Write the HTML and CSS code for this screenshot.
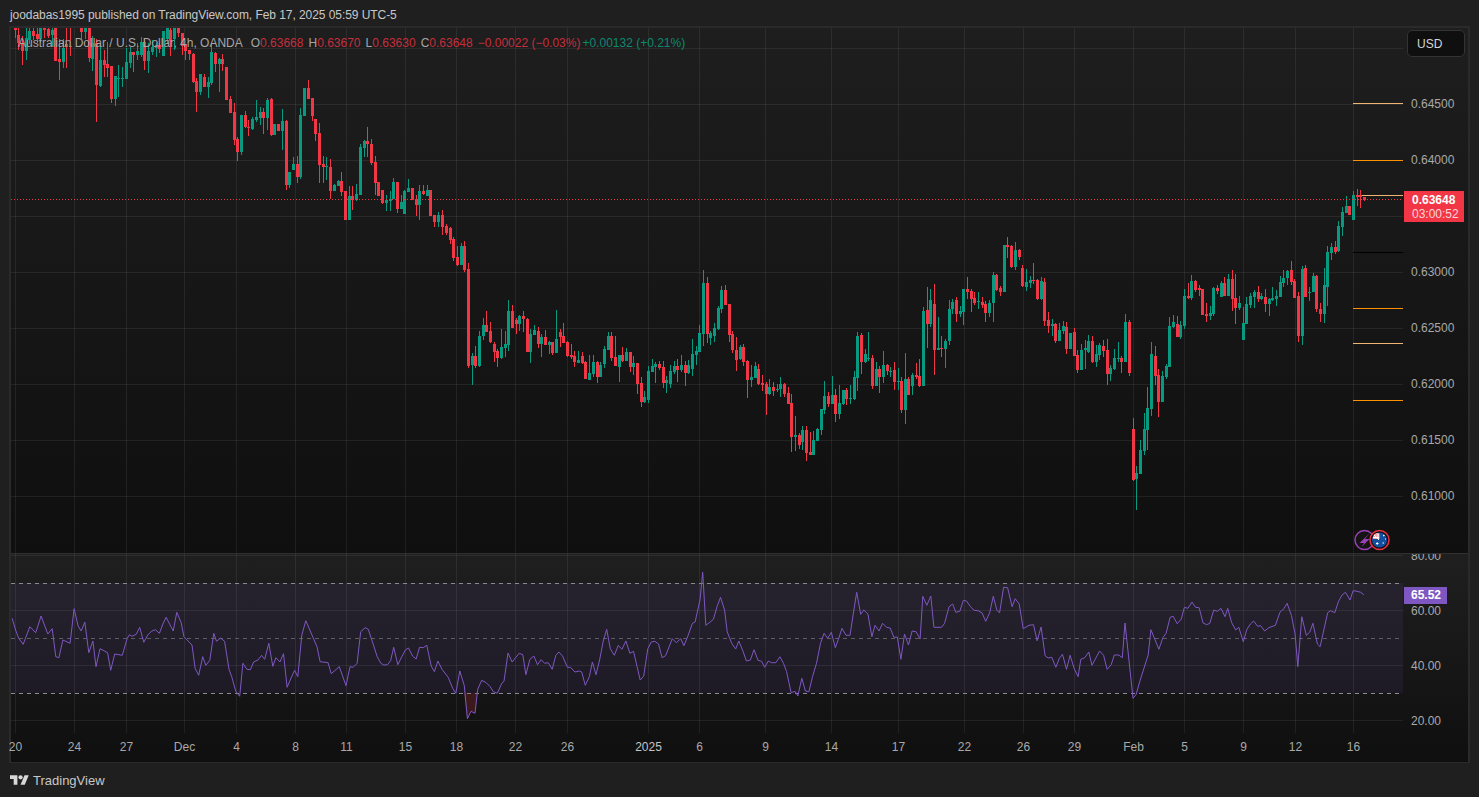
FILE: index.html
```html
<!DOCTYPE html>
<html lang="en">
<head>
  <meta charset="UTF-8">
  <title>AUD/USD 4h - TradingView</title>
  <link rel="stylesheet" href="styles.css">
</head>
<body>
  <header class="publish-bar">joodabas1995 published on TradingView.com, Feb 17, 2025 05:59 UTC-5</header>

  <main class="chart">
    <section class="pane pane-main">
      <svg class="plot" id="mainPlot" viewBox="11 28 1392 525"></svg>
      <div class="legend">
        <span class="legend-title">Australian Dollar / U.S. Dollar, 4h, OANDA</span>
        <span>O<b class="down">0.63668</b></span>
        <span>H<b class="down">0.63670</b></span>
        <span>L<b class="down">0.63630</b></span>
        <span>C<b class="down">0.63648</b></span>
        <span class="down legend-change">−0.00022 (−0.03%)</span>
        <span class="up">+0.00132 (+0.21%)</span>
      </div>
      <div class="price-scale main-scale">
        <div class="currency">USD</div>
        <div class="tick">0.64500</div>
        <div class="tick">0.64000</div>
        <div class="tick"></div>
        <div class="tick">0.63000</div>
        <div class="tick">0.62500</div>
        <div class="tick">0.62000</div>
        <div class="tick">0.61500</div>
        <div class="tick">0.61000</div>
        <div class="last-price"><strong>0.63648</strong><span>03:00:52</span></div>
      </div>
    </section>

    <section class="lower">
      <div class="pane pane-rsi">
        <svg class="plot" id="rsiPlot" viewBox="11 554 1392 179"></svg>
        <div class="price-scale rsi-scale">
          <div class="tick">80.00</div>
          <div class="tick">60.00</div>
          <div class="tick">40.00</div>
          <div class="tick">20.00</div>
          <div class="rsi-value">65.52</div>
        </div>
      </div>
      <div class="time-axis" id="timeAxis"></div>
    </section>
  </main>

  <footer class="brand">
    <svg class="brand-logo" viewBox="0 4 36 18"><path d="M14 22H7V11H0V4h14v18zM28 22h-8l7.5-18h8L28 22z"/><circle cx="20" cy="8" r="4"/></svg>
    <span>TradingView</span>
  </footer>

  <script src="chart.js"></script>
</body>
</html>
```

FILE: styles.css
```css
* {
  box-sizing: border-box;
}

body {
  margin: 0;
  height: 797px;
  overflow: hidden;
  background-color: #1f1f1f;
  color: #b2b5be;
  font-family: "Liberation Sans", Arial, sans-serif;
  font-size: 12px;
}

.publish-bar {
  height: 26px;
  padding: 8px 0 0 10px;
  line-height: 15px;
  letter-spacing: -0.06px;
  color: #c8c8c8;
}

.chart {
  height: 737px;
  margin: 0 9px 0 9px;
  border: 2px solid #2a2a2a;
  display: flex;
  flex-direction: column;
}

.pane {
  position: relative;
  display: flex;
  overflow: hidden;
}

.plot {
  display: block;
  width: 1392px;
  flex: none;
}

.pane-main {
  height: 526px;
  flex: none;
  border-bottom: 1px solid #303030;
  background: linear-gradient(#1e1e1e, #0f0f0f);
}

.pane-main .plot {
  height: 525px;
}

.lower {
  flex: 1;
  background: linear-gradient(#1f1f1f, #0f0f0f);
}

.pane-rsi {
  height: 179px;
}

.pane-rsi .plot {
  height: 179px;
}

.price-scale {
  position: relative;
  flex: 1;
  padding-left: 8px;
  color: #a9a9a9;
}

.main-scale {
  padding-top: 48px;
}

.tick {
  height: 56px;
  line-height: 56px;
}

.rsi-scale {
  margin-top: -25px;
}

.rsi-scale .tick {
  height: 55px;
  line-height: 55px;
}

.currency {
  position: absolute;
  top: 2px;
  left: 4px;
  width: 58px;
  height: 27px;
  padding-left: 9px;
  line-height: 26px;
  color: #d6d6d6;
  background-color: #0f0f0f;
  border: 1px solid #333;
  border-radius: 5px;
}

.last-price {
  position: absolute;
  top: 163px;
  left: 1px;
  width: 60px;
  height: 31px;
  padding: 2px 0 0 8px;
  display: flex;
  flex-direction: column;
  line-height: 14px;
  color: #fff;
  background-color: #f23645;
}

.last-price span {
  color: rgba(255, 255, 255, 0.8);
}

.rsi-value {
  position: absolute;
  top: 58px;
  left: 1px;
  width: 43px;
  height: 17px;
  padding-left: 7px;
  line-height: 17px;
  font-weight: bold;
  color: #fff;
  background-color: #7e57c2;
}

.legend {
  position: absolute;
  top: 8px;
  left: 7px;
  display: flex;
  gap: 5px;
  line-height: 15px;
  color: #a6a6a6;
}

.legend b {
  font-weight: normal;
}

.legend-title {
  margin-right: 3px;
}

.legend-change {
  margin-right: -3px;
}

.down {
  color: #c52f3d;
}

.up {
  color: #0b8a70;
}

.time-axis {
  position: relative;
  height: 29px;
  color: #a9a9a9;
}

.time-label {
  position: absolute;
  top: 7px;
  line-height: 15px;
  transform: translateX(-50%);
}

.time-label.year {
  color: #c4c4c4;
}

.brand {
  height: 34px;
  padding: 0 0 0 10px;
  display: flex;
  align-items: center;
  gap: 4px;
  font-size: 13px;
  color: #c8c8c8;
}

.brand-logo {
  width: 19px;
  height: 10px;
  fill: #d8d8d8;
}

.grid {
  stroke: rgba(255, 255, 255, 0.07);
  stroke-width: 1;
  shape-rendering: crispEdges;
}

.bars-up {
  fill: #089981;
  shape-rendering: crispEdges;
}

.bars-down {
  fill: #f23645;
  shape-rendering: crispEdges;
}

.level {
  stroke: #ff9100;
  stroke-width: 1;
  shape-rendering: crispEdges;
}

.level.pale {
  stroke: #efb573;
}

.level.dark {
  stroke: #000;
}

.price-line {
  stroke: #f23645;
  stroke-width: 1;
  stroke-dasharray: 1 2;
  shape-rendering: crispEdges;
}

.rsi-band {
  fill: rgba(126, 87, 194, 0.1);
}

.rsi-dash {
  stroke: #8a8a92;
  stroke-width: 1;
  stroke-dasharray: 4 4;
  shape-rendering: crispEdges;
}

.rsi-dash.mid {
  stroke: #5c5c62;
}

.rsi-line {
  fill: none;
  stroke: #7e57c2;
  stroke-width: 1;
}

.rsi-low {
  fill: rgba(242, 54, 69, 0.18);
}
```

FILE: chart.js
```js
var PLOT_LEFT = 11;
var PLOT_RIGHT = 1403;

// bars: colour + body top, body bottom, wick top, wick bottom
var blocks = [
  { left: 0, top: 30, first: 45, last: 1315, bars:
    "r-6,0,-6,23 r15,40,-6,60 r43,63,18,105 g23,63,-6,90 g3,30,-6,43 r3,18,-6,30 r13,26,-6,38 g-6,26,-6,38 r-6,0,-6,23 r-2,18,-6,23 " +
    "g0,16,-6,48 r-6,93,-6,93 r88,95,28,150 g53,95,28,113 r43,50,-6,113 r48,51,-6,78 r-9,-8,-9,-8 r-9,-8,-9,-8 r-6,6,-6,28 g-6,6,-6,28 " +
    "r-6,83,-6,96 g38,86,18,123 r38,165,28,276 g90,168,48,170 r90,105,60,140 r103,113,35,140 r108,207,108,218 g138,207,138,228 g145,147,105,200 g145,148,110,170 " +
    "g97,147,55,148 g65,100,50,115 r67,75,65,125 g63,75,40,90 g35,75,20,80 r35,93,25,120 g62,93,40,128 g52,65,30,75 g45,55,40,82 r45,58,40,70 " +
    "g3,78,3,78 g-6,28,-6,40 r0,33,-6,78 g-6,28,-6,60 r-6,8,-6,20 r8,48,8,75 r43,63,43,90 r60,72,60,90 r72,156,70,160 r153,186,145,245 " +
    "g132,186,132,195 r141,171,132,172 g156,171,140,204 g66,159,40,165 r69,102,66,125 g87,102,85,186 r87,102,72,123 r111,210,111,210 r207,249,198,250 r246,330,220,345 " +
    "r327,366,320,392 g255,366,255,375 r255,291,243,295 r291,294,270,318 g267,297,262,300 g261,270,210,275 g246,264,230,285 r246,264,233,312 g210,264,205,300 r207,315,204,318 " +
    "g282,315,282,315 r282,303,282,303 g273,303,237,360 r273,465,270,480 g426,465,426,474 g402,420,381,420 r402,441,378,459 g255,441,234,447 g174,258,174,258 r174,207,150,207 " +
    "r204,258,204,273 r267,312,267,333 r309,405,279,459 r402,411,378,459 g408,411,381,450 r411,483,387,507 g465,483,462,483 g453,468,450,468 r453,486,426,498 r483,570,483,570 " +
    "g498,570,468,570 r498,510,468,540 g492,510,462,512 g351,495,342,495 g333,354,330,380 r333,342,291,382 r342,399,327,405 r396,459,378,495 r456,498,456,498 r480,519,480,522 " +
    "g510,519,495,543 g507,513,483,543 g456,507,444,507 r456,537,456,549 g516,537,495,537 g483,552,480,552 g474,486,447,486 r474,510,474,510 r507,525,495,558 g483,525,465,570 " +
    "r483,492,465,495 g480,498,465,498 r480,558,480,558 r555,575,555,590 g555,575,545,590" },
  { left: 440, top: 170, first: 8, last: 1375, bars:
    "r135,171,120,195 r168,189,162,195 r174,210,171,222 r207,264,201,273 r261,286,228,288 g228,285,219,285 r228,300,213,306 r297,588,279,594 g558,585,549,645 r558,588,528,594 " +
    "g498,588,483,591 g465,498,444,510 r465,486,423,486 r483,516,456,519 r522,546,516,576 r543,564,537,591 g531,564,477,567 g522,534,483,561 g423,525,390,543 r423,474,405,474 " +
    "r450,462,444,492 g438,462,435,483 r438,447,423,486 r447,546,444,546 g492,546,477,579 g480,495,465,495 r483,522,471,534 g501,522,492,561 r501,525,480,525 g516,525,513,552 " +
    "r516,549,516,555 g507,549,420,549 r486,501,477,531 r498,519,459,519 r516,558,513,561 r555,561,522,567 r558,576,543,591 g570,579,543,579 r558,579,546,582 r576,627,573,627 " +
    "g609,630,555,630 g576,612,555,621 r576,621,573,639 g585,621,576,621 g537,582,528,594 g498,540,486,540 r498,564,486,573 r561,588,498,588 g555,591,555,636 r555,573,531,576 " +
    "g546,573,534,573 r546,591,546,606 g579,591,558,615 r579,642,579,672 r639,696,621,711 g681,696,663,699 g603,690,588,699 g588,606,567,606 g582,591,576,639 r582,594,573,600 " +
    "r591,639,573,654 g630,639,618,669 g603,642,585,654 g588,606,573,612 r588,600,567,636 g585,600,555,606 r585,609,573,648 g585,609,570,612 g552,597,507,618 g543,555,528,585 " +
    "g489,546,465,546 g339,492,300,528 r339,492,321,519 g489,504,483,525 g474,498,459,516 g414,477,408,480 g360,417,348,429 r360,405,345,405 r402,495,402,516 r492,540,483,549 " +
    "r540,570,501,603 g531,567,525,570 r531,576,522,588 r573,630,570,684 g621,630,585,651 g588,624,576,624 r597,642,582,645 r639,645,615,663 r642,672,636,735 g651,672,627,675 " +
    "r651,663,636,678 g657,660,642,666 g642,657,621,681 r642,672,639,681 r669,702,651,702 r699,801,672,846 g795,801,738,843 r795,825,789,837 g780,816,768,840 r780,849,768,873 " +
    "r846,855,786,855 g810,855,783,855 g777,813,774,813 g717,780,717,795 g678,720,633,732 r678,702,666,711 g675,702,618,702 r675,732,657,756 g699,732,645,747 g660,702,660,705 " +
    "r660,687,654,705 g684,687,645,702 g621,687,603,690 g498,624,486,663 r495,576,489,612 g552,576,537,579 g564,567,486,573 r564,648,555,657 g597,648,576,648 r597,621,588,669 " +
    "g585,621,543,639 r585,603,582,615 g603,606,591,621 r600,636,576,660 g633,636,594,660" },
  { left: 900, top: 180, first: 4, last: 1394, bars:
    "r603,690,590,698 g597,690,519,732 r597,645,590,645 g585,617,578,645 r585,592,549,597 r588,619,537,621 g393,617,381,617 r390,432,321,504 g360,432,327,441 r372,510,312,585 " +
    "g504,510,411,510 r504,508,468,531 g483,507,477,564 g387,483,360,495 g366,387,357,402 r360,402,351,426 g393,402,378,411 g327,396,327,435 r327,336,291,357 r333,357,327,396 " +
    "r354,369,336,375 g363,366,336,387 r366,375,351,384 r372,399,363,426 g369,399,360,411 g285,369,276,426 r285,330,282,333 r324,336,318,348 g195,336,195,336 r195,201,171,234 " +
    "r198,261,195,264 g210,261,186,270 r210,231,207,240 r264,318,255,321 g306,321,267,333 g300,309,288,324 r300,303,249,312 r300,357,297,360 g303,357,291,360 r306,423,294,438 " +
    "r420,438,396,459 g432,438,417,468 r432,483,429,489 g450,483,429,483 g438,453,423,462 r441,507,426,522 g459,507,459,507 r456,528,444,528 r525,570,510,579 g510,570,492,570 " +
    "g504,510,480,567 g483,516,465,519 r483,546,468,549 g522,546,495,561 g495,525,489,540 r498,513,480,531 r510,582,477,615 g564,582,555,603 g534,567,507,570 g534,537,486,546 " +
    "r534,546,528,579 g426,546,402,546 r426,579,420,588 r747,900,714,903 g879,897,858,990 g810,882,780,882 g747,813,699,825 g684,750,621,810 g522,687,486,708 r528,588,498,615 " +
    "r585,666,567,711 g588,666,573,666 g558,591,552,597 g438,561,411,561 g426,441,405,444 r432,471,408,471 g435,471,423,477 g348,438,327,447 r348,354,309,357 g303,354,285,360 " +
    "r303,330,300,336 r324,330,315,348 r327,405,327,405 r402,408,369,426 g399,408,378,420 g324,402,321,408 r324,333,315,342 g309,351,303,351 r309,348,291,348 g297,348,282,348 " +
    "r297,357,270,393 r354,384,282,432 g369,384,348,390 g429,480,381,480 g372,432,351,432 g348,375,339,384 g336,351,330,384 r336,357,318,366 g348,357,339,360 r351,372,327,396 " +
    "g357,372,354,408 g354,360,321,363 g348,357,330,378 g306,351,288,351 g294,309,270,321 g273,294,270,315 r270,306,243,315 r303,354,297,354 r348,468,336,486 g267,468,258,495 " +
    "r264,351,255,351 g336,339,321,363 g288,336,279,336 r288,387,285,396 r387,402,369,426 g315,402,264,429 g216,321,198,378 g201,219,189,240 r201,216,183,222 g138,213,123,216 " +
    "g96,141,81,168 g78,99,48,99 r78,105,78,105 g45,120,33,120 r45,51,27,78 r45,51,30,84 r51,60,51,63" }
];

// rsi line vertices, traced in two crops of the pane
var rsiTraces = [
  { left: 0, points: "27,205 35,240 42,265 52,283 67,230 80,248 92,198 107,252 117,236 125,320 132,323 141,270 157,280 166,176 175,228 182,243 190,216 199,308 208,273 215,350 224,296 241,308 248,361 257,312 274,316 285,265 290,254 296,259 305,253 313,232 322,277 331,255 340,243 348,239 357,250 365,222 372,202 388,243 396,187 406,218 412,260 430,285 437,355 445,376 454,320 461,346 470,331 479,250 485,274 494,264 503,274 513,358 519,380 528,423 537,439 544,340 553,358 561,359 568,336 578,330 586,316 593,328 602,280 611,349 618,323 627,336 635,311 643,412 652,384 660,361 667,380 676,255 685,212 710,290 717,335 735,338 742,371 760,350 775,407 784,350 791,352 800,340 808,245 818,233 825,238 835,279 845,320 853,340 860,345 868,344 875,332 882,292 891,344 900,320 908,300 915,294 924,318 932,327 940,292 948,293 956,286 966,348 973,365 981,333 990,358 1004,382 1014,415 1021,430 1030,363 1040,407 1047,506 1055,484 1064,490 1070,418 1079,391 1089,398 1098,410 1105,425 1114,430 1124,400 1129,394 1138,309 1147,336 1163,310 1171,314 1178,374 1187,328 1196,318 1204,344 1212,329 1220,340 1228,338 1237,358 1245,316 1252,306 1260,318 1271,352 1278,352 1288,366 1298,363 1303,366 1311,406 1320,380 1327,336 1335,374 1343,330 1351,275 1359,238 1367,296 1376,316 1385,286 1393,298 1402,273 1411,310 1419,304 1427,350 1434,390 1442,378 1451,296 1459,276 1467,274 1475,282 1483,323 1491,317 1506,266 1515,278 1525,266 1532,287 1541,258 1551,220 1557,216 1568,150" },
  { left: 700, points: "6,67 13,226 22,217 30,208 38,170 46,142 55,180 61,245 71,280 80,297 87,273 96,303 104,333 113,330 121,299 130,331 138,334 145,352 153,333 160,338 170,338 179,320 187,340 194,365 204,428 213,424 219,438 228,385 236,423 244,425 252,380 261,340 270,280 278,250 286,265 294,247 303,293 310,268 318,235 327,256 336,256 343,195 351,127 360,193 367,180 376,192 385,260 392,226 401,243 409,220 418,232 426,234 434,262 442,261 450,328 458,252 467,285 475,243 484,245 493,267 499,139 508,166 517,138 524,232 541,232 548,220 558,170 566,162 573,187 582,184 590,151 597,153 606,170 614,181 623,182 632,189 640,214 649,188 657,139 665,181 671,188 680,112 689,113 699,170 706,146 715,162 724,236 737,226 747,224 755,272 764,231 773,317 780,324 788,322 797,352 805,325 812,313 821,358 829,316 838,355 847,380 853,328 862,323 871,306 878,346 895,303 904,316 912,358 921,344 928,315 938,315 946,323 952,219 970,445 977,433 985,395 1004,315 1010,239 1028,298 1037,263 1044,250 1053,202 1060,199 1069,221 1078,207 1085,172 1093,175 1102,156 1110,172 1118,173 1127,219 1135,224 1142,220 1151,180 1159,184 1167,175 1176,200 1182,175 1191,218 1200,240 1207,232 1217,275 1225,238 1233,222 1240,213 1249,229 1256,227 1265,243 1274,233 1289,226 1299,187 1308,176 1315,160 1325,197 1333,252 1339,350 1348,200 1358,256 1366,246 1373,220 1383,282 1389,290 1406,188 1412,182 1422,188 1430,155 1438,135 1446,127 1456,150 1463,122 1472,124 1480,127 1487,134" }
];

var gridX = [15, 74, 126, 184, 236, 295, 346, 405, 456, 515, 567, 648, 699, 765, 831, 898, 964, 1023, 1074, 1133, 1184, 1243, 1295, 1353];
var timeLabels = ["20", "24", "27", "Dec", "4", "8", "11", "15", "18", "22", "26", "2025", "6", "9", "14", "17", "22", "26", "29", "Feb", "5", "9", "12", "16"];
var priceGrid = [48, 104, 160, 216, 272, 328, 384, 440, 496];
var rsiGrid = [555, 610, 665, 720];

function line(cls, x1, y1, x2, y2) {
  return '<line class="' + cls + '" x1="' + x1 + '" y1="' + y1 + '" x2="' + x2 + '" y2="' + y2 + '"/>';
}

function gridLines(rows, top, bottom) {
  var out = "";
  gridX.forEach(function (x) { out += line("grid", x + 0.5, top, x + 0.5, bottom); });
  rows.forEach(function (y) { out += line("grid", PLOT_LEFT, y + 0.5, PLOT_RIGHT, y + 0.5); });
  return out;
}

function candlePaths() {
  var up = "", down = "";
  blocks.forEach(function (block) {
    var bars = block.bars.split(" ");
    var step = (block.last - block.first) / (bars.length - 1);
    bars.forEach(function (bar, i) {
      var v = bar.slice(1).split(",").map(function (n) { return block.top + Number(n) / 3; });
      var x = Math.round(block.left + (block.first + i * step) / 3 - 1.5);
      var top = Math.round(v[0]), bottom = Math.max(Math.round(v[1]), top + 1);
      var high = Math.round(v[2]), low = Math.round(v[3]);
      var d = "M" + x + " " + top + "h3V" + bottom + "h-3z" +
              "M" + (x + 1) + " " + high + "h1V" + low + "h-1z";
      if (bar[0] === "g") up += d; else down += d;
    });
  });
  return '<path class="bars-up" d="' + up + '"/><path class="bars-down" d="' + down + '"/>';
}

function markers() {
  return '<g transform="translate(1355 530)">' +
    '<circle cx="9.5" cy="10" r="9.5" fill="#141414" stroke="#9c3fb5" stroke-width="1.5"/>' +
    '<path d="M14.5 3.5L4.5 13h4.5l-2.5 4 8-8H10z" fill="#9c3fb5"/>' +
    '<circle cx="24.5" cy="10" r="9.5" fill="#0f0f0f" stroke="#e5303f" stroke-width="1.6"/>' +
    '<circle cx="24.5" cy="10" r="7.5" fill="#1450a0"/>' +
    '<path d="M17.5 8.5l1.5-4 2.5-1.5 3 .5v5.5h-6z" fill="#f7a6ae"/>' +
    '<path d="M19 5l5 5M23 3.5v5.5M18 7.5h6" stroke="#fff" stroke-width="1"/>' +
    '<path d="M21 13.5h2.5M22.2 12.3v2.5M28 5.5h1.5M28.7 4.8v1.5M27.5 13h1.5M30 9h1" stroke="#fff" stroke-width="1"/>' +
    '</g>';
}

function drawMain() {
  var svg = gridLines(priceGrid, 28, 553);
  svg += candlePaths();
  svg += line("level pale", 1353, 103.5, PLOT_RIGHT, 103.5);
  svg += line("level", 1353, 160.5, PLOT_RIGHT, 160.5);
  svg += line("level pale", 1362, 195.5, PLOT_RIGHT, 195.5);
  svg += line("level dark", 1353, 252.5, PLOT_RIGHT, 252.5);
  svg += line("level", 1353, 308.5, PLOT_RIGHT, 308.5);
  svg += line("level pale", 1353, 343.5, PLOT_RIGHT, 343.5);
  svg += line("level", 1353, 400.5, PLOT_RIGHT, 400.5);
  svg += line("price-line", PLOT_LEFT, 199.5, PLOT_RIGHT, 199.5);
  svg += markers();
  document.getElementById("mainPlot").innerHTML = svg;
}

function drawRsi() {
  var points = [];
  rsiTraces.forEach(function (trace) {
    trace.points.split(" ").forEach(function (p) {
      var v = p.split(",");
      points.push((trace.left + Number(v[0]) / 2.24).toFixed(1) + "," + (550 + Number(v[1]) / 3).toFixed(1));
    });
  });
  var svg = '<rect class="rsi-band" x="' + PLOT_LEFT + '" y="583" width="1392" height="110"/>';
  svg += gridLines(rsiGrid, 554, 733);
  svg += line("rsi-dash", PLOT_LEFT, 583.5, PLOT_RIGHT, 583.5);
  svg += line("rsi-dash mid", PLOT_LEFT, 638.5, PLOT_RIGHT, 638.5);
  svg += line("rsi-dash", PLOT_LEFT, 693.5, PLOT_RIGHT, 693.5);
  svg += '<polygon class="rsi-low" points="464,693 467,718 471,711 475,713 477,693"/>';
  svg += '<polyline class="rsi-line" points="' + points.join(" ") + '"/>';
  document.getElementById("rsiPlot").innerHTML = svg;
}

function drawTimeAxis() {
  var axis = document.getElementById("timeAxis");
  timeLabels.forEach(function (text, i) {
    var span = document.createElement("span");
    span.className = text === "2025" ? "time-label year" : "time-label";
    span.textContent = text;
    span.style.left = (gridX[i] - PLOT_LEFT + 0.5) + "px";
    axis.appendChild(span);
  });
}

drawMain();
drawRsi();
drawTimeAxis();
```
